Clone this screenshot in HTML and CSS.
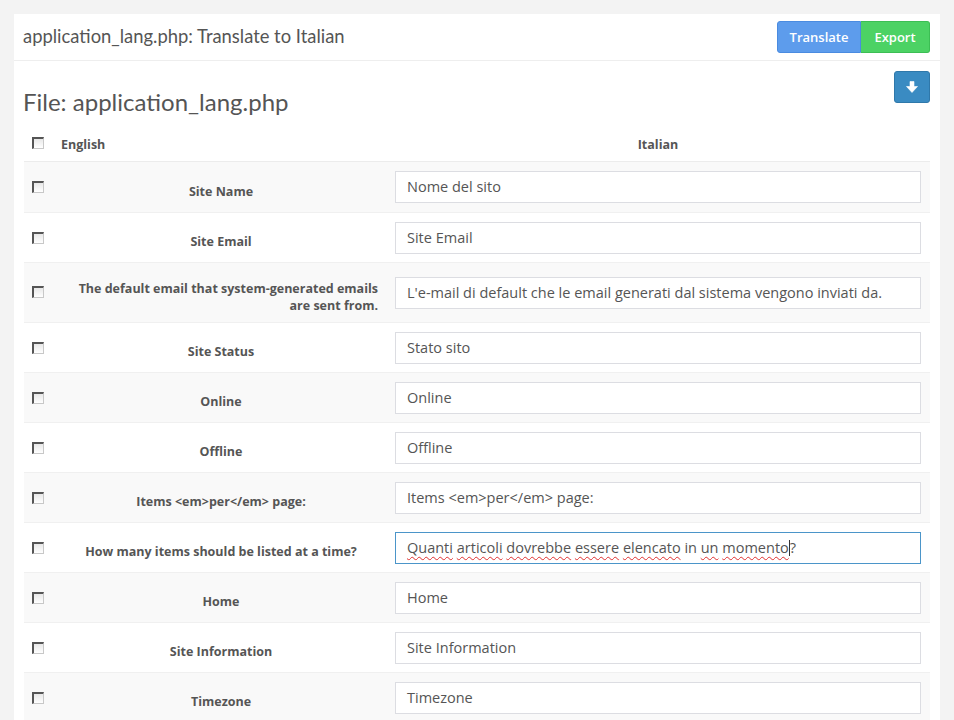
FILE: index.html
```html
<!DOCTYPE html>
<html>
<head>
<meta charset="utf-8">
<link rel="stylesheet" href="styles.css">
</head>
<body>
<div class="panel">
  <div class="panel-header">
    <div class="panel-title">application_lang.php: Translate to Italian</div>
    <div class="btn-group">
      <button class="btn btn-translate">Translate</button>
      <button class="btn btn-export">Export</button>
    </div>
  </div>
  <div class="panel-body">
    <div class="toolbar">
      <h2 class="file-title">File: application_lang.php</h2>
      <button class="btn-download" aria-label="Download">
        <svg width="12" height="12" viewBox="0 0 12 12"><path d="M4 0.5h4v5h3.5L6 11.5 0.5 5.5H4z" fill="#fff" stroke="#fff" stroke-width="0.6" stroke-linejoin="round"/></svg>
      </button>
    </div>
    <div class="grid">
      <div class="row head">
        <div class="c-check"><span class="cb"></span></div>
        <div class="c-label-head">English</div>
        <div class="c-input-head">Italian</div>
      </div>
      <div class="row odd">
        <div class="c-check"><span class="cb"></span></div>
        <div class="c-label"><span>Site Name</span></div>
        <div class="c-input"><div class="field">Nome del sito</div></div>
      </div>
      <div class="row">
        <div class="c-check"><span class="cb"></span></div>
        <div class="c-label"><span>Site Email</span></div>
        <div class="c-input"><div class="field">Site Email</div></div>
      </div>
      <div class="row odd">
        <div class="c-check"><span class="cb"></span></div>
        <div class="c-label"><span>The default email that system-generated emails are sent from.</span></div>
        <div class="c-input"><div class="field">L'e-mail di default che le email generati dal sistema vengono inviati da.</div></div>
      </div>
      <div class="row">
        <div class="c-check"><span class="cb"></span></div>
        <div class="c-label"><span>Site Status</span></div>
        <div class="c-input"><div class="field">Stato sito</div></div>
      </div>
      <div class="row odd">
        <div class="c-check"><span class="cb"></span></div>
        <div class="c-label"><span>Online</span></div>
        <div class="c-input"><div class="field">Online</div></div>
      </div>
      <div class="row">
        <div class="c-check"><span class="cb"></span></div>
        <div class="c-label"><span>Offline</span></div>
        <div class="c-input"><div class="field">Offline</div></div>
      </div>
      <div class="row odd">
        <div class="c-check"><span class="cb"></span></div>
        <div class="c-label"><span>Items &lt;em&gt;per&lt;/em&gt; page:</span></div>
        <div class="c-input"><div class="field">Items &lt;em&gt;per&lt;/em&gt; page:</div></div>
      </div>
      <div class="row">
        <div class="c-check"><span class="cb"></span></div>
        <div class="c-label"><span>How many items should be listed at a time?</span></div>
        <div class="c-input"><div class="field focus"><span class="sp">Quanti</span> <span class="sp">articoli</span> <span class="sp">dovrebbe</span> <span class="sp">essere</span> <span class="sp">elencato</span> in <span class="sp">un</span> <span class="sp">momento</span><span class="caret"></span>?</div></div>
      </div>
      <div class="row odd">
        <div class="c-check"><span class="cb"></span></div>
        <div class="c-label"><span>Home</span></div>
        <div class="c-input"><div class="field">Home</div></div>
      </div>
      <div class="row">
        <div class="c-check"><span class="cb"></span></div>
        <div class="c-label"><span>Site Information</span></div>
        <div class="c-input"><div class="field">Site Information</div></div>
      </div>
      <div class="row odd">
        <div class="c-check"><span class="cb"></span></div>
        <div class="c-label"><span>Timezone</span></div>
        <div class="c-input"><div class="field">Timezone</div></div>
      </div>
    </div>
  </div>
</div>
</body>
</html>
```
FILE: styles.css
```css
html, body {
  margin: 0;
  padding: 0;
}
body {
  background: #f3f3f3;
  padding: 14px 14px 0 14px;
  font-family: "Open Sans", "Liberation Sans", sans-serif;
  color: #555;
  overflow: hidden;
  height: 706px;
}
.panel {
  width: 926px;
  background: #fff;
  min-height: 706px;
}
.panel-header {
  height: 47px;
  border-bottom: 1px solid #eeeeee;
  display: flex;
  align-items: center;
  justify-content: space-between;
  padding: 0 10px 0 9px;
  box-sizing: border-box;
}
.panel-title {
  font-family: "Lato", sans-serif;
  font-size: 18.4px;
  color: #555;
  margin-top: -3px;
}
.btn-group {
  display: flex;
}
.btn {
  font-family: "Open Sans", sans-serif;
  font-weight: 600;
  font-size: 13px;
  color: #fff;
  height: 32px;
  border: 1px solid transparent;
  padding: 0 10px;
  cursor: pointer;
}
.btn-translate {
  background: #5d9cec;
  border-color: #4a8be0;
  border-radius: 3px 0 0 3px;
  width: 84px;
}
.btn-export {
  background: #4cd264;
  border-color: #3cbe54;
  border-radius: 0 3px 3px 0;
  width: 69px;
  border-left: none;
}
.panel-body {
  padding: 10px 10px 0 10px;
}
.toolbar {
  display: flex;
  justify-content: space-between;
  align-items: flex-start;
}
.file-title {
  font-family: "Lato", sans-serif;
  font-weight: 400;
  font-size: 24px;
  line-height: 26px;
  margin: 18px 0 0 -1px;
  color: #555;
}
.btn-download {
  width: 36px;
  height: 32px;
  background: #3a8bc2;
  border: 1px solid #2f78aa;
  border-radius: 3px;
  display: flex;
  align-items: center;
  justify-content: center;
  padding: 0;
}
.btn-download svg {
  display: block;
}
.grid {
  margin-top: 11px;
}
.row {
  display: flex;
  align-items: center;
  height: 50px;
  border-top: 1px solid #f0f0f0;
  box-sizing: border-box;
}
.row.odd {
  background: #f9f9f9;
}
.row.head {
  height: 36px;
  border-top: none;
  border-bottom: 1px solid #ececec;
  align-items: flex-start;
}
.row.head + .row {
  border-top: none;
}
.row:nth-child(4) {
  height: 60px;
}
.c-check {
  width: 32px;
  padding-left: 8px;
  box-sizing: border-box;
  align-self: flex-start;
  padding-top: 19px;
}
.row.head .c-check {
  padding-top: 11px;
}
.row:nth-child(4) .c-check {
  padding-top: 23px;
}
.cb {
  display: block;
  width: 12px;
  height: 12px;
  box-sizing: border-box;
  border: 1px solid #8a8a8a;
  border-top: 2px solid #555;
  border-left: 2px solid #555;
  border-right-color: #c8c8c8;
  border-bottom-color: #c8c8c8;
  background: linear-gradient(#e8e8e8, #fff);
}
.c-label-head {
  width: 330px;
  font-weight: 700;
  font-size: 12.5px;
  padding-left: 5px;
  padding-top: 10px;
  box-sizing: border-box;
}
.c-input-head {
  flex: 1;
  text-align: center;
  font-weight: 700;
  font-size: 12.5px;
  padding-top: 10px;
}
.c-label {
  width: 330px;
  text-align: center;
  padding: 8px 8px 0 8px;
  box-sizing: border-box;
  font-weight: 700;
  font-size: 12.5px;
  line-height: 17px;
}
.c-label span {
  display: inline-block;
  text-align: right;
}
.c-input {
  flex: 1;
  padding: 0 9px;
}
.field {
  height: 32px;
  border: 1px solid #dcdde2;
  box-sizing: border-box;
  background: #fff;
  font-family: "Open Sans", sans-serif;
  font-size: 14.5px;
  line-height: 30px;
  padding-left: 11px;
  color: #555;
  white-space: nowrap;
}
.field.focus {
  border-color: #4b95c9;
}
.sp {
  text-decoration: underline wavy #e03030;
  text-decoration-thickness: 1px;
  text-underline-offset: 3px;
}
.caret {
  display: inline-block;
  width: 1px;
  height: 16px;
  background: #333;
  vertical-align: -3px;
}
```
